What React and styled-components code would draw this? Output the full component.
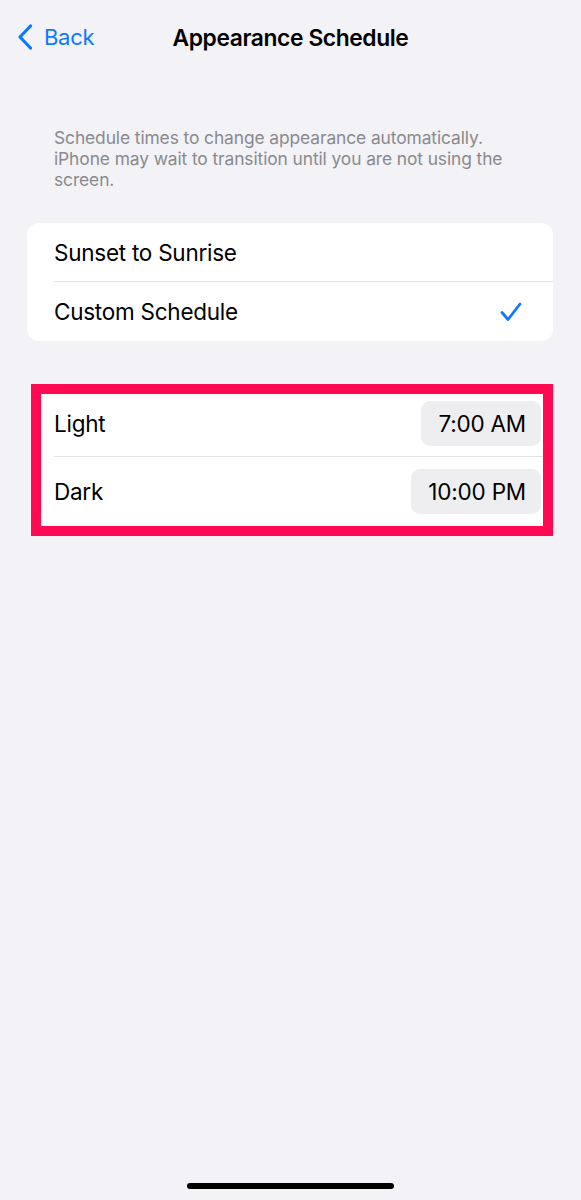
import React from "react";
import styled, { createGlobalStyle } from "styled-components";

const GlobalStyle = createGlobalStyle`
  html, body {
    margin: 0;
    padding: 0;
    background: #f2f2f7;
  }
  body {
    font-family: Inter, "Noto Sans", "Liberation Sans", sans-serif;
    -webkit-font-smoothing: antialiased;
  }
`;

const Screen = styled.div`
  width: 581px;
  min-height: 1200px;
  background: #f2f2f7;
  display: flex;
  flex-direction: column;
  box-sizing: border-box;
`;

const NavBar = styled.div`
  height: 74px;
  display: grid;
  grid-template-columns: 1fr auto 1fr;
  align-items: center;
`;

const BackButton = styled.div`
  display: flex;
  align-items: center;
  gap: 11px;
  padding-left: 17px;
  color: #0a7aff;
  font-size: 22px;
  letter-spacing: -0.3px;
`;

const Title = styled.div`
  font-size: 22.8px;
  font-weight: 600;
  color: #000;
  letter-spacing: -0.4px;
`;

const Content = styled.div`
  display: flex;
  flex-direction: column;
  padding: 0 28px 0 27px;
`;

const Footnote = styled.p`
  margin: 53px 0 0;
  padding: 0 27px;
  font-size: 17.4px;
  line-height: 21px;
  color: #8a8a8e;
  letter-spacing: -0.1px;
`;

const Card = styled.div`
  margin-top: ${(p) => p.$mt}px;
  background: #fff;
  border-radius: 12px;
  overflow: hidden;
`;

const HighlightCard = styled.div`
  margin: 43px 0 0 4px;
  background: #fff;
  border: 10px solid #ff0a52;
  display: flex;
  flex-direction: column;
`;

const Row = styled.div`
  height: ${(p) => p.$h}px;
  display: flex;
  align-items: center;
  justify-content: space-between;
  padding: ${(p) => p.$pad};
  box-sizing: border-box;
  position: relative;
  ${(p) =>
    p.$divider
      ? `&::after {
    content: "";
    position: absolute;
    left: ${p.$divLeft}px;
    right: 0;
    bottom: 0;
    height: 1px;
    background: #e4e4e8;
  }`
      : ""}
`;

const Label = styled.span`
  font-size: 22.5px;
  color: #000;
  letter-spacing: -0.25px;
`;

const TimePill = styled.span`
  height: 45px;
  display: flex;
  align-items: center;
  padding: 0 15px 0 17px;
  background: #eeeef0;
  border-radius: 9px;
  font-size: 22.5px;
  color: #000;
  letter-spacing: -0.2px;
`;

const HomeIndicator = styled.div`
  margin: auto auto 11px;
  width: 207px;
  height: 6px;
  border-radius: 3px;
  background: #000;
`;

const Chevron = () => (
  <svg width="16" height="26" viewBox="0 0 16 26" fill="none">
    <path
      d="M13.5 2 L3 13 L13.5 24"
      stroke="#0a7aff"
      strokeWidth="3.2"
      strokeLinecap="round"
      strokeLinejoin="round"
    />
  </svg>
);

const Check = () => (
  <svg width="22" height="20" viewBox="0 0 22 20" fill="none">
    <path
      d="M2 10.5 L8 17.5 L20 2"
      stroke="#0a7aff"
      strokeWidth="2.8"
      strokeLinecap="round"
      strokeLinejoin="round"
    />
  </svg>
);

export default function App() {
  return (
    <>
      <GlobalStyle />
      <Screen>
        <NavBar>
          <BackButton>
            <Chevron />
            Back
          </BackButton>
          <Title>Appearance Schedule</Title>
          <div />
        </NavBar>
        <Content>
          <Footnote>
            Schedule times to change appearance automatically. iPhone may wait
            to transition until you are not using the screen.
          </Footnote>
          <Card $mt={33}>
            <Row $h={59} $pad="0 31px 0 27px" $divider $divLeft={27}>
              <Label>Sunset to Sunrise</Label>
            </Row>
            <Row $h={59} $pad="0 31px 0 27px">
              <Label>Custom Schedule</Label>
              <Check />
            </Row>
          </Card>
          <HighlightCard>
            <Row $h={63} $pad="0 2px 5px 13px" $divider $divLeft={13}>
              <Label>Light</Label>
              <TimePill>7:00 AM</TimePill>
            </Row>
            <Row $h={69} $pad="0 2px 0 13px">
              <Label>Dark</Label>
              <TimePill>10:00 PM</TimePill>
            </Row>
          </HighlightCard>
        </Content>
        <HomeIndicator />
      </Screen>
    </>
  );
}
